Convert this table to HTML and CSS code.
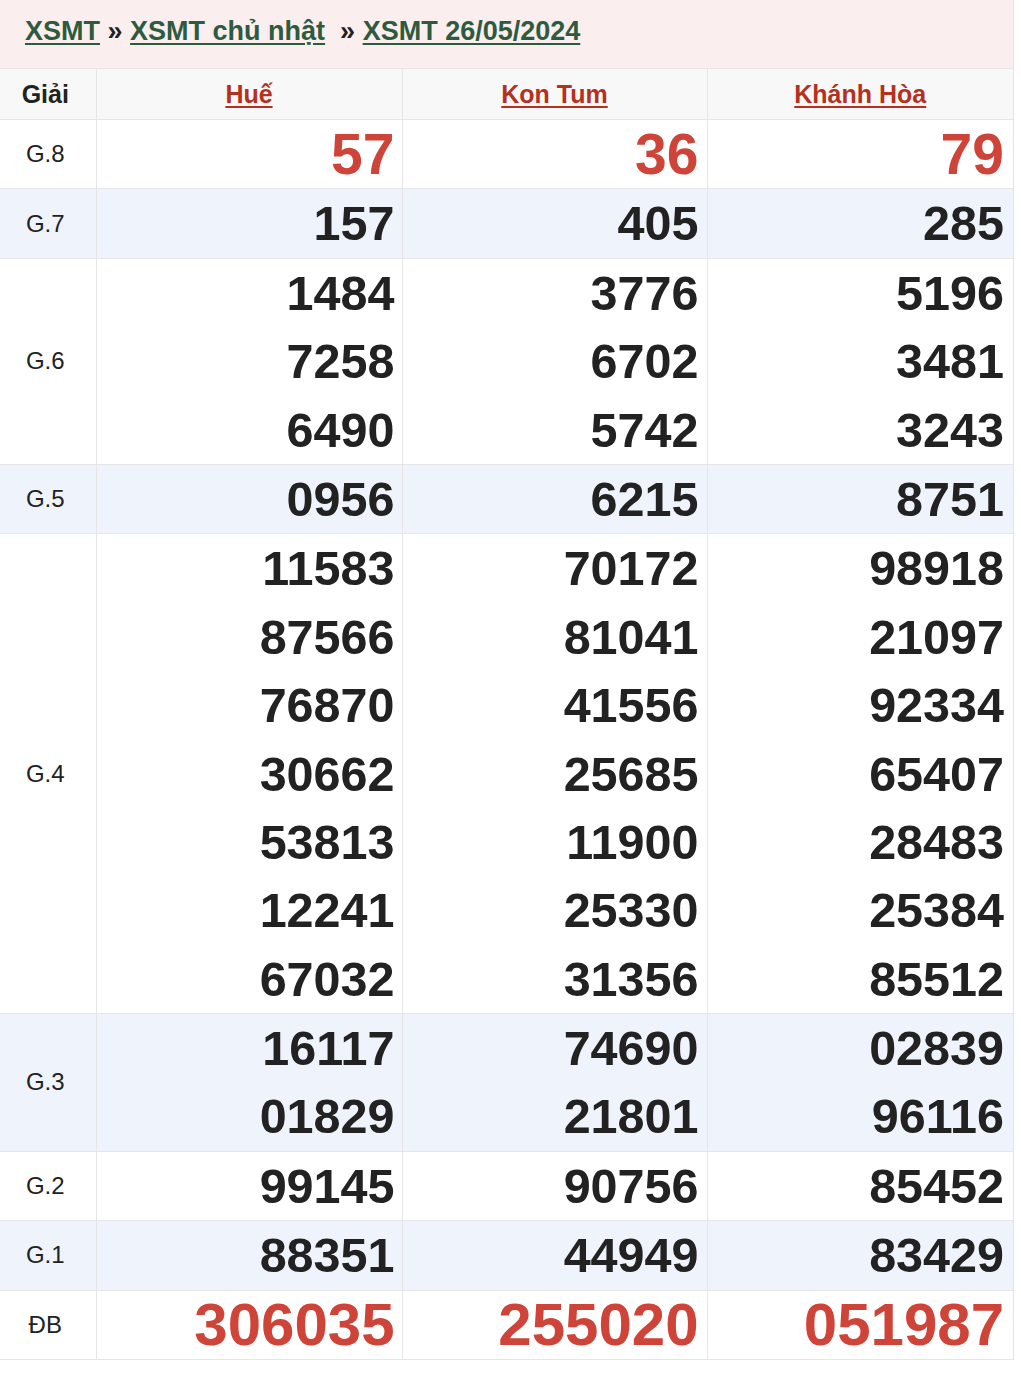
FILE: index.html
```html
<!DOCTYPE html>
<html lang="vi">
<head>
<meta charset="utf-8">
<title>XSMT 26/05/2024</title>
<link rel="stylesheet" href="styles.css">
</head>
<body>
<div class="page">
  <div class="crumb">
    <a href="#" class="crumb-link">XSMT</a> <span class="sep">»</span> <a href="#" class="crumb-link">XSMT chủ nhật</a>&nbsp; <span class="sep">»</span> <a href="#" class="crumb-link">XSMT 26/05/2024</a>
  </div>
  <table class="kq">
    <colgroup>
      <col class="c-giai"><col class="c-wide"><col class="c-mid"><col class="c-wide">
    </colgroup>
    <thead>
      <tr class="head">
        <th class="lbl lbl-head">Giải</th>
        <th><a href="#" class="prov">Huế</a></th>
        <th><a href="#" class="prov">Kon Tum</a></th>
        <th><a href="#" class="prov">Khánh Hòa</a></th>
      </tr>
    </thead>
    <tbody>
      <tr>
        <td class="lbl">G.8</td>
        <td class="num g8"><div>57</div></td>
        <td class="num g8"><div>36</div></td>
        <td class="num g8"><div>79</div></td>
      </tr>
      <tr class="alt">
        <td class="lbl">G.7</td>
        <td class="num"><div>157</div></td>
        <td class="num"><div>405</div></td>
        <td class="num"><div>285</div></td>
      </tr>
      <tr>
        <td class="lbl">G.6</td>
        <td class="num"><div>1484</div><div>7258</div><div>6490</div></td>
        <td class="num"><div>3776</div><div>6702</div><div>5742</div></td>
        <td class="num"><div>5196</div><div>3481</div><div>3243</div></td>
      </tr>
      <tr class="alt">
        <td class="lbl">G.5</td>
        <td class="num"><div>0956</div></td>
        <td class="num"><div>6215</div></td>
        <td class="num"><div>8751</div></td>
      </tr>
      <tr>
        <td class="lbl">G.4</td>
        <td class="num"><div>11583</div><div>87566</div><div>76870</div><div>30662</div><div>53813</div><div>12241</div><div>67032</div></td>
        <td class="num"><div>70172</div><div>81041</div><div>41556</div><div>25685</div><div>11900</div><div>25330</div><div>31356</div></td>
        <td class="num"><div>98918</div><div>21097</div><div>92334</div><div>65407</div><div>28483</div><div>25384</div><div>85512</div></td>
      </tr>
      <tr class="alt">
        <td class="lbl">G.3</td>
        <td class="num"><div>16117</div><div>01829</div></td>
        <td class="num"><div>74690</div><div>21801</div></td>
        <td class="num"><div>02839</div><div>96116</div></td>
      </tr>
      <tr>
        <td class="lbl">G.2</td>
        <td class="num"><div>99145</div></td>
        <td class="num"><div>90756</div></td>
        <td class="num"><div>85452</div></td>
      </tr>
      <tr class="alt">
        <td class="lbl">G.1</td>
        <td class="num"><div>88351</div></td>
        <td class="num"><div>44949</div></td>
        <td class="num"><div>83429</div></td>
      </tr>
      <tr>
        <td class="lbl">ĐB</td>
        <td class="num db"><div>306035</div></td>
        <td class="num db"><div>255020</div></td>
        <td class="num db"><div>051987</div></td>
      </tr>
    </tbody>
  </table>
</div>
</body>
</html>
```

FILE: styles.css
```css
html, body {
  margin: 0;
  padding: 0;
  background: #ffffff;
}

body {
  font-family: "Liberation Sans", Arial, sans-serif;
  color: #222222;
}

.page {
  width: 1013px;
  border-right: 1px solid #e4e4e4;
}

.crumb {
  height: 68px;
  box-sizing: border-box;
  background: #fbeeee;
  padding: 15px 0 0 25px;
  font-size: 27px;
  font-weight: bold;
  line-height: 32px;
  color: #222222;
  white-space: nowrap;
}

.crumb-link {
  color: #2e5a3e;
  text-decoration: underline;
  text-underline-offset: 3px;
  text-decoration-thickness: 2px;
}

.sep {
  color: #222222;
}

.kq {
  width: 1013px;
  border-collapse: collapse;
  table-layout: fixed;
}

.c-giai { width: 96px; }
.c-wide { width: 306px; }
.c-mid { width: 305px; }

.kq th,
.kq td {
  border: 1px solid #e6e6e6;
  padding: 0;
}

.kq tr > :first-child { border-left: none; }
.kq tr > :last-child { border-right: none; }

.head th {
  height: 50px;
  background: #f8f8f8;
  text-align: center;
  vertical-align: middle;
  font-size: 25px;
  font-weight: bold;
}

.prov {
  color: #b5311f;
  text-decoration: underline;
  text-underline-offset: 3px;
  text-decoration-thickness: 2px;
}

.lbl {
  text-align: center;
  vertical-align: middle;
  font-size: 24px;
  font-weight: normal;
  color: #222222;
  padding-right: 5px !important;
}

.lbl-head {
  font-weight: bold;
  font-size: 25px;
}

.num {
  text-align: right;
  vertical-align: middle;
  font-weight: bold;
  font-size: 48.5px;
  color: #222222;
}

.kq td.num:nth-child(2) { padding-right: 7px; }
.kq td.num:nth-child(3) { padding-right: 8px; }
.kq td.num:nth-child(4) { padding-right: 9px; }

.num div {
  height: 68.4px;
  line-height: 68.4px;
}

.g8 {
  color: #cf4438;
  font-size: 57px;
}

.db {
  color: #cf4438;
  font-size: 60px;
}

.alt td {
  background: #eff3fb;
}
```
